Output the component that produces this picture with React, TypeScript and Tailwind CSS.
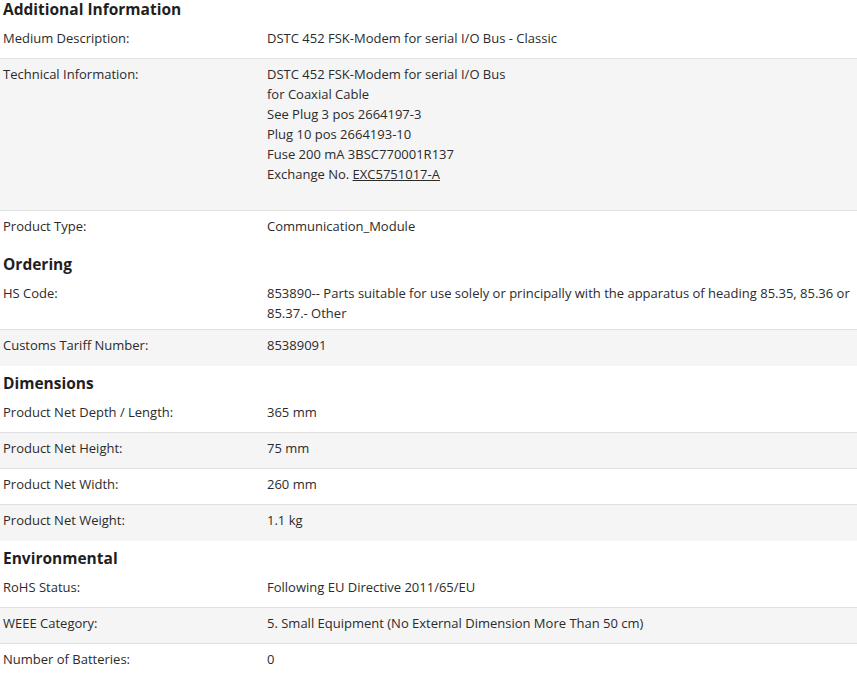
import React from "react";

type Row = { label: string; value: React.ReactNode; extra?: boolean };

const font = { fontFamily: '"Open Sans", "Noto Sans", sans-serif' };

function Section({ title, rows, first }: { title: string; rows: Row[]; first?: boolean }) {
  return (
    <div>
      <div
        className={`${first ? "leading-[18px] mb-[5px]" : "mt-[5px] mb-[2px] leading-[24px]"} pl-[3px] text-[15.5px] font-bold text-[#1f1f1f]`}
      >
        {title}
      </div>
      <div>
        {rows.map((r, i) => (
          <div
            key={r.label}
            className={`flex min-h-[36px] text-[13px] leading-[20px] text-[#2b2b2b] ${i % 2 === 1 ? "bg-[#f5f5f5]" : "bg-white"} ${i < rows.length - 1 ? "border-b border-[#e0e0e0]" : ""}`}
          >
            <div className="w-[267px] shrink-0 pl-[3px] pt-[5px] pb-[6px]">{r.label}</div>
            <div className={`flex-1 pr-[4px] pt-[5px] ${r.extra ? "pb-[26px]" : "pb-[6px]"}`}>{r.value}</div>
          </div>
        ))}
      </div>
    </div>
  );
}

export default function App() {
  return (
    <div className="w-[857px] h-[680px] overflow-hidden bg-white" style={font}>
      <Section
        first
        title="Additional Information"
        rows={[
          { label: "Medium Description:", value: "DSTC 452 FSK-Modem for serial I/O Bus - Classic" },
          {
            label: "Technical Information:",
            extra: true,
            value: (
              <>
                DSTC 452 FSK-Modem for serial I/O Bus
                <br />
                for Coaxial Cable
                <br />
                See Plug 3 pos 2664197-3
                <br />
                Plug 10 pos 2664193-10
                <br />
                Fuse 200 mA 3BSC770001R137
                <br />
                Exchange No. <span className="underline">EXC5751017-A</span>
              </>
            ),
          },
          { label: "Product Type:", value: "Communication_Module" },
        ]}
      />
      <Section
        title="Ordering"
        rows={[
          {
            label: "HS Code:",
            value:
              "853890-- Parts suitable for use solely or principally with the apparatus of heading 85.35, 85.36 or 85.37.- Other",
          },
          { label: "Customs Tariff Number:", value: "85389091" },
        ]}
      />
      <Section
        title="Dimensions"
        rows={[
          { label: "Product Net Depth / Length:", value: "365 mm" },
          { label: "Product Net Height:", value: "75 mm" },
          { label: "Product Net Width:", value: "260 mm" },
          { label: "Product Net Weight:", value: "1.1 kg" },
        ]}
      />
      <Section
        title="Environmental"
        rows={[
          { label: "RoHS Status:", value: "Following EU Directive 2011/65/EU" },
          { label: "WEEE Category:", value: "5. Small Equipment (No External Dimension More Than 50 cm)" },
          { label: "Number of Batteries:", value: "0" },
        ]}
      />
    </div>
  );
}
